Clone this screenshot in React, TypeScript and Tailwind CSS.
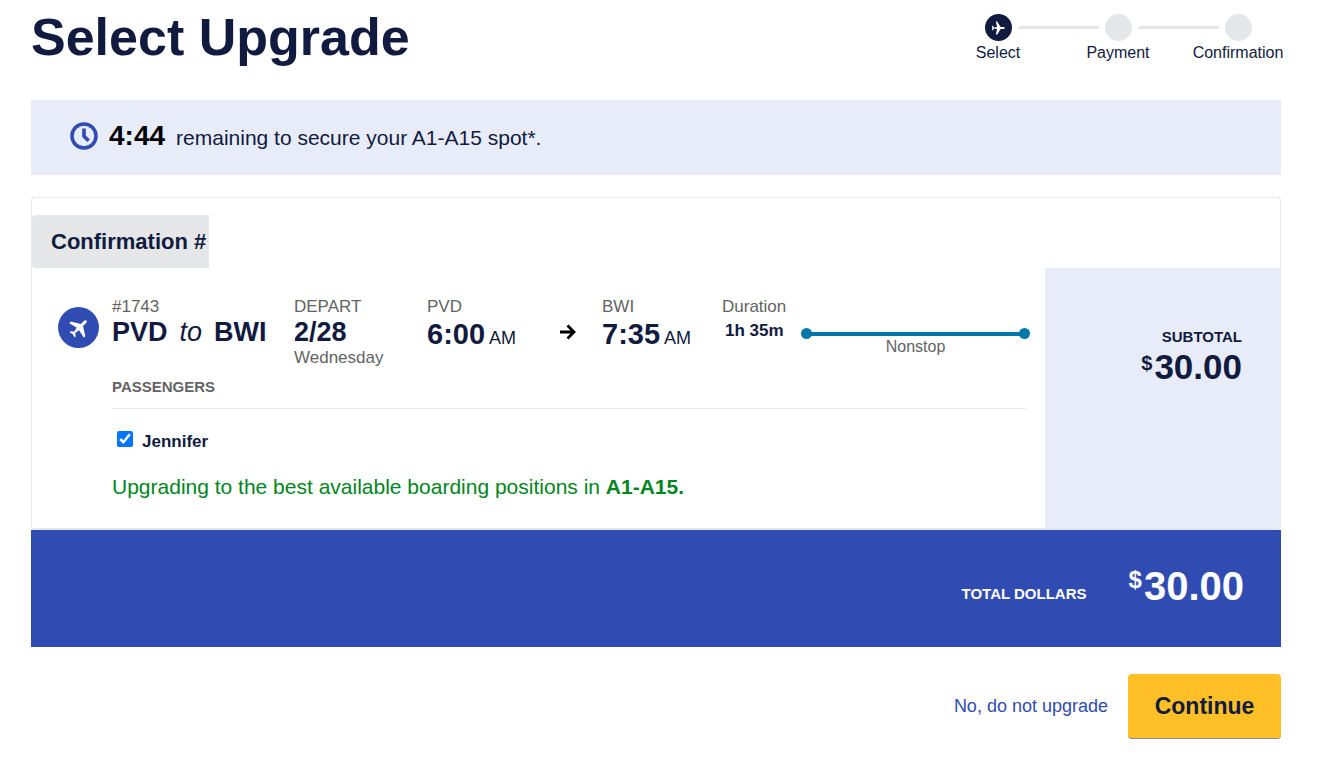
import type { ReactNode } from "react";

function Plane({ className }: { className: string }) {
  return (
    <svg viewBox="0 0 24 24" className={className} fill="currentColor" aria-hidden="true">
      <path d="M23.500 12c0-.9-1-1.600-2.400-1.600h-4.600L11.100 1.500C10.800 1 10.400.8 9.900.8H8.300l2.100 9.400-5.200.9-2.200-3H1.400l1 3.900-1 3.900H3l2.200-3 5.200.9-2.100 9.400h1.600c.5 0 .9-.2 1.200-.7l5.400-8.900h4.600c1.400 0 2.400-.7 2.400-1.600z" />
    </svg>
  );
}

function Step({ label, active }: { label: string; active?: boolean }) {
  return (
    <li className="flex w-[120px] flex-col items-center">
      <span
        className={
          active
            ? "flex size-[27px] items-center justify-center rounded-full bg-[#111b40] text-white"
            : "size-[27px] rounded-full bg-[#e4e6e8]"
        }
      >
        {active && <Plane className="size-[14px]" />}
      </span>
      <span className="text-base leading-6">{label}</span>
    </li>
  );
}

function Field({ label, children }: { label: string; children: ReactNode }) {
  return (
    <div>
      <div className="text-[17px] leading-5 text-[#636363]">{label}</div>
      {children}
    </div>
  );
}

function Time({ value }: { value: string }) {
  return (
    <div className="text-[29px] leading-8 font-bold">
      {value} <span className="-ml-1 text-[18px] font-normal">AM</span>
    </div>
  );
}

export default function App() {
  return (
    <main className="pt-1 pr-[47px] pb-9 pl-[31px] font-['Liberation_Sans',Arial,sans-serif] text-[#111b40]">
      <header className="flex items-start justify-between">
        <h1 className="text-[52px] leading-[66px] font-bold">Select Upgrade</h1>
        <div className="relative -mr-[17px] pt-[10px]">
          <ol className="flex">
            <Step label="Select" active />
            <Step label="Payment" />
            <Step label="Confirmation" />
          </ol>
          <span className="absolute top-[22px] left-[81px] h-[3px] w-20 bg-[#e4e6e8]" />
          <span className="absolute top-[22px] left-[201px] h-[3px] w-20 bg-[#e4e6e8]" />
        </div>
      </header>

      <section className="mt-[30px] flex h-[75px] items-center bg-[#e8ecf8] pl-[39px]">
        <svg viewBox="0 0 28 28" className="mb-1 size-7" fill="none" stroke="#304cb2" aria-hidden="true">
          <circle cx="14" cy="14" r="12" strokeWidth="3.600" />
          <path d="M14 6.500v7.700l4.600 4.600" strokeWidth="3.600" />
        </svg>
        <p className="mb-1 flex items-baseline pl-[11px]">
          <strong className="text-[28px] leading-9 text-black">4:44</strong>
          <span className="pl-[11px] text-[21px]">remaining to secure your A1-A15 spot*.</span>
        </p>
      </section>

      <section className="mt-[22px] rounded-sm border border-b-2 border-[#e4e6e8] pt-[17px]">
        <h2 className="flex h-[53px] w-[177px] items-center rounded-l-sm bg-[#e4e6e8] pl-[19px] text-[22px] font-bold">
          Confirmation #
        </h2>
        <div className="flex">
          <div className="flex min-w-0 flex-1 pt-[29px] pb-[27px] pl-[26px]">
            <span className="mt-[10px] mr-[13px] flex size-[41px] shrink-0 items-center justify-center rounded-full bg-[#304cb2] text-white">
              <Plane className="size-[22px] -rotate-45" />
            </span>
            <div className="flex-1">
              <div className="grid grid-cols-[182px_133px_133px_42px_120px_79px_1fr] pr-[15px]">
                <Field label="#1743">
                  <div className="flex gap-3 text-[27px] leading-[30px] font-bold">
                    <span>PVD</span>
                    <em className="font-normal">to</em>
                    <span>BWI</span>
                  </div>
                </Field>
                <Field label="DEPART">
                  <div className="text-[27px] leading-[30px] font-bold">2/28</div>
                  <div className="pt-px text-[17px] leading-5 text-[#636363]">Wednesday</div>
                </Field>
                <Field label="PVD">
                  <div className="pt-px">
                    <Time value="6:00" />
                  </div>
                </Field>
                <svg viewBox="0 0 16 16" className="mt-[27px] size-4" fill="none" stroke="#000" strokeWidth="2.800" aria-hidden="true">
                  <path d="M0 8h14M7.500 1.500L14 8l-6.500 6.500" />
                </svg>
                <Field label="BWI">
                  <div className="pt-px">
                    <Time value="7:35" />
                  </div>
                </Field>
                <Field label="Duration">
                  <div className="pt-1 pl-[3px] text-[17px] leading-5 font-bold">1h 35m</div>
                </Field>
                <div className="pt-[31px]">
                  <div className="flex items-center">
                    <span className="size-[11px] rounded-full bg-[#0077a8]" />
                    <span className="-mx-px h-1 flex-1 bg-[#0077a8]" />
                    <span className="size-[11px] rounded-full bg-[#0077a8]" />
                  </div>
                  <div className="text-center text-base leading-4 text-[#636363]">Nonstop</div>
                </div>
              </div>
              <div className="mr-[19px]">
                <h3 className="border-b border-[#e4e6e8] pt-[9px] pb-[11px] text-[15px] leading-5 font-bold text-[#636363]">
                  PASSENGERS
                </h3>
                <label className="mt-[22px] flex items-start pl-[5px] text-[17px] leading-[22px] font-bold">
                  <input type="checkbox" defaultChecked className="mr-[9px] size-4 accent-[#0075ff]" />
                  Jennifer
                </label>
                <p className="mt-5 text-[21px] leading-7 text-[#008522]">
                  Upgrading to the best available boarding positions in <strong>A1-A15.</strong>
                </p>
              </div>
            </div>
          </div>
          <aside className="w-[235px] shrink-0 bg-[#e8ecf8] pt-[59px] pr-[38px] text-right font-bold">
            <div className="text-[15px] leading-5">SUBTOTAL</div>
            <div className="flex items-start justify-end gap-[2px] text-[35px] leading-10">
              <span className="text-[20px] leading-8">$</span>30.00
            </div>
          </aside>
        </div>
      </section>

      <section className="flex h-[117px] items-start justify-end bg-[#304cb2] pr-[37px] font-bold text-white">
        <div className="pt-[54px] text-[15px] leading-5">TOTAL DOLLARS</div>
        <div className="flex items-start gap-[2px] pt-8 pl-[42px] text-[40px] leading-[48px]">
          <span className="text-[24px] leading-9">$</span>30.00
        </div>
      </section>

      <div className="mt-[27px] flex items-center justify-end gap-5">
        <a href="#decline" className="text-[18px] text-[#304cb2]">
          No, do not upgrade
        </a>
        <button
          type="button"
          className="h-[65px] w-[153px] rounded-sm border-b border-[#8c8c8c] bg-[#ffbf27] text-[23px] font-bold"
        >
          Continue
        </button>
      </div>
    </main>
  );
}
